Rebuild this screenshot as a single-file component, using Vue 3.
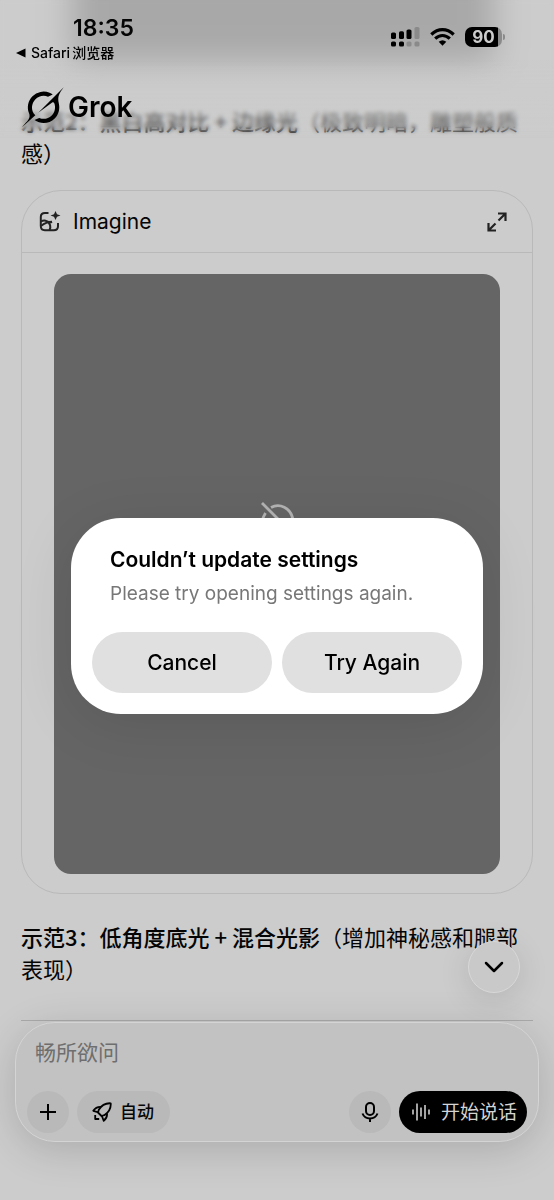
<script setup>
import { ref } from 'vue'

const prompt = ref('')
const dialogActions = ['Cancel', 'Try Again']
</script>

<template>
  <div class="screen">
    <main class="thread">
      <p class="para"><strong>示范2：黑白高对比 + 边缘光</strong>（极致明暗，雕塑般质感）</p>

      <section class="card">
        <header class="card-head">
          <svg class="icon" width="22" height="22" viewBox="0 0 22 22" fill="none" stroke="#222" stroke-width="2">
            <path d="M9.500 2H6Q1.800 2 1.800 6v9q0 4.200 4 4.200h9q4.200 0 4.200-4V12" />
            <path d="M2 10.500Q5 8.800 8 10.300T13 10.800M13 10.800Q7 11 2 15M8 10.300Q13 14 10.500 19" />
            <path d="M16.500 0l1.500 3.300 3.500 1.200-3.500 1.300L16.500 9 15 5.800l-3.500-1.300L15 3.300z" fill="#222" stroke="none" />
          </svg>
          <h2>Imagine</h2>
          <button class="plain" aria-label="Expand">
            <svg class="icon" width="20" height="20" viewBox="0 0 20 20" fill="none" stroke="#222" stroke-width="2.200">
              <path d="M11 1.500h7.500V9M18.500 1.500l-7 7M1.500 11v7.500H9M1.500 18.500l7-7" />
            </svg>
          </button>
        </header>
        <div class="picture">
          <svg class="icon" width="40" height="40" viewBox="0 0 40 40" fill="none" stroke="#b4b4b4" stroke-width="2.800">
            <path d="M5 1l31 31M14 5.500C22 1 34 5 36 18q0 6-3 10M8.500 11C1 22 8 35 20 35q4 0 7-2" />
          </svg>
        </div>
      </section>

      <p class="para"><strong>示范3：低角度底光 + 混合光影</strong>（增加神秘感和腿部表现）</p>
      <hr />
    </main>

    <div class="top-shade"></div>
    <div class="top-blur"></div>

    <header class="top">
      <div class="status">
        <div class="clock">
          <time>18:35</time>
          <a href="#">
            <svg class="icon" width="10" height="10" viewBox="0 0 10 10"><path d="M0 5L9.500 .5v9z" /></svg>
            Safari<span>浏览器</span>
          </a>
        </div>
        <div class="signals">
          <svg class="icon" width="29" height="20" viewBox="0 0 29 20">
            <rect x="0" y="5.500" width="5" height="6.500" rx="1.600" />
            <rect x="8" y="4.300" width="5" height="7.700" rx="1.600" />
            <rect x="15.500" y="2.500" width="5" height="9.500" rx="1.600" />
            <rect x="23.500" y="0" width="5" height="12" rx="1.600" fill="#8a8a8a" />
            <rect x="0" y="14.500" width="5" height="5" rx="1.600" />
            <rect x="8" y="14.500" width="5" height="5" rx="1.600" />
            <rect x="15.500" y="14.500" width="5" height="5" rx="1.600" fill="#8a8a8a" />
            <rect x="23.500" y="14.500" width="5" height="5" rx="1.600" fill="#8a8a8a" />
          </svg>
          <svg class="icon" width="25" height="18" viewBox="0 0 25 18" fill="none" stroke="#000" stroke-width="3.200">
            <path d="M1.300 6.500Q6.500 1.700 12.500 1.700T23.700 6.500" />
            <path d="M5.200 10.600Q8.500 7.500 12.500 7.500T19.800 10.600" />
            <path d="M8.700 13.800Q12.500 10.600 16.300 13.800L12.500 17.800z" fill="#000" stroke="none" />
          </svg>
          <div class="battery"><span>90</span><i></i></div>
        </div>
      </div>

      <div class="brand">
        <svg class="icon" width="42" height="42" viewBox="0 0 24 24">
          <path d="M9.270 15.290l7.978-5.897c.391-.29.95-.177 1.137.272.98 2.369.542 5.215-1.410 7.169-1.951 1.954-4.667 2.382-7.149 1.406l-2.711 1.257c3.889 2.661 8.611 2.003 11.562-.953 2.341-2.344 3.066-5.539 2.388-8.420l.006.007c-.983-4.232.242-5.924 2.750-9.383.06-.082.12-.164.179-.248l-3.301 3.305v-.01L9.267 15.292M7.623 16.723c-2.792-2.670-2.310-6.801.071-9.184 1.761-1.763 4.647-2.483 7.166-1.425l2.705-1.250a7.808 7.808 0 00-1.829-1A8.975 8.975 0 005.984 5.830c-2.533 2.536-3.330 6.436-1.962 9.764 1.022 2.487-.653 4.246-2.340 6.022-.599.63-1.199 1.259-1.682 1.925l7.620-6.815" />
        </svg>
        <span>Grok</span>
      </div>
    </header>

    <div class="bottom">
      <button class="jump" aria-label="Scroll to latest">
        <svg class="icon" width="20" height="12" viewBox="0 0 20 12" fill="none" stroke="#000" stroke-width="2.500" stroke-linecap="round" stroke-linejoin="round">
          <path d="M2 2l8 8 8-8" />
        </svg>
      </button>
      <form class="composer" @submit.prevent>
        <input v-model="prompt" type="text" aria-label="畅所欲问" placeholder="畅所欲问" />
        <div class="tools">
          <button class="round" type="button" aria-label="Add">
            <svg class="icon" width="16" height="16" viewBox="0 0 16 16" fill="none" stroke="#000" stroke-width="2"><path d="M8 0v16M0 8h16" /></svg>
          </button>
          <button class="mode" type="button">
            <svg class="icon" width="20" height="20" viewBox="0 0 20 20" fill="none" stroke="#000" stroke-width="1.800" stroke-linejoin="round">
              <path d="M18.700 1.300Q11 .8 6.800 7.700L6 10.500 9.500 14l2.800-.8Q19.300 8.500 18.700 1.300z" />
              <path d="M9 4.800Q4 4.500 1.300 8.800L6.500 10.300M15 11.500Q15.500 15.500 11.700 18.800L9.800 13.800" />
              <path d="M3.200 13v4h4" />
            </svg>
            <span>自动</span>
          </button>
          <button class="round mic" type="button" aria-label="Dictate">
            <svg class="icon" width="18" height="20" viewBox="0 0 18 20" fill="none" stroke="#000" stroke-width="2">
              <rect x="5" y="1" width="8" height="12" rx="4" />
              <path d="M1.500 11.500Q3.500 16.500 9 16.500T16.500 11.500M9 16.500V20" />
            </svg>
          </button>
          <button class="talk" type="button">
            <svg class="icon" width="18" height="18" viewBox="0 0 18 18" fill="none" stroke="#ccc" stroke-width="1.600">
              <path d="M1 6.500v5M5 .5v17M9 4.500v9M13 2v14M17 6.500v5" />
            </svg>
            <span>开始说话</span>
          </button>
        </div>
      </form>
    </div>

    <div class="overlay">
      <div class="dialog" role="alertdialog" aria-labelledby="dlg-title" aria-describedby="dlg-text">
        <h1 id="dlg-title">Couldn’t update settings</h1>
        <p id="dlg-text">Please try opening settings again.</p>
        <div class="actions">
          <button v-for="label in dialogActions" :key="label" type="button">{{ label }}</button>
        </div>
      </div>
    </div>
  </div>
</template>

<style>
body {
  margin: 0;
  background: #ccc;
}
</style>

<style scoped>
.screen {
  position: relative;
  min-height: 100vh;
  overflow: hidden;
  background: #ccc;
  color: #050505;
  font-family: Inter, "Noto Sans CJK SC", sans-serif;
}
.icon {
  display: block;
  flex: none;
}
button {
  margin: 0;
  padding: 0;
  border: 0;
  font: inherit;
  color: inherit;
  cursor: pointer;
}
.thread {
  padding: 104px 21px 0;
}
.para {
  margin: 0;
  font-family: "Noto Sans CJK SC", sans-serif;
  font-size: 22px;
  line-height: 32px;
}
.para strong {
  font-weight: 500;
}
.card {
  margin: 22px 0 26px;
  border: 1px solid #b9b9b9;
  border-radius: 40px;
}
.card-head {
  display: flex;
  align-items: center;
  gap: 12px;
  height: 61px;
  padding: 0 25px 0 17px;
  border-bottom: 1px solid #b9b9b9;
}
.card-head h2 {
  flex: 1;
  margin: 0;
  font-size: 21px;
  font-weight: 400;
}
.plain {
  background: none;
}
.picture {
  display: flex;
  justify-content: center;
  height: 600px;
  margin: 21px 32px 19px;
  padding-top: 228px;
  box-sizing: border-box;
  border-radius: 17px;
  background: #656565;
}
hr {
  height: 1px;
  margin: 36px 0 0;
  border: 0;
  background: #aaa;
}
.top-shade {
  position: absolute;
  top: -40px;
  left: 72px;
  right: 60px;
  height: 102px;
  background: #a8a8a8;
  filter: blur(16px);
}
.top-blur {
  position: absolute;
  inset: 0 0 auto;
  height: 138px;
  background: linear-gradient(rgba(204, 204, 204, 0) 60px, rgba(204, 204, 204, .7) 108px, rgba(204, 204, 204, .2) 136px);
  backdrop-filter: blur(2px);
  mask-image: linear-gradient(#000 126px, transparent);
}
.top {
  position: absolute;
  inset: 0 0 auto;
}
.status {
  display: flex;
  justify-content: space-between;
  padding: 14px 49px 0 16px;
}
time {
  display: block;
  padding-left: 57px;
  font-size: 23px;
  line-height: 28px;
  font-weight: 600;
}
.clock a {
  display: flex;
  align-items: center;
  gap: 5px;
  color: #000;
  font-size: 14px;
  line-height: 22px;
  font-weight: 500;
  text-decoration: none;
}
.clock a span {
  margin-left: -3px;
}
.signals {
  display: flex;
  align-items: center;
  gap: 10px;
  height: 46px;
}
.battery {
  display: flex;
  align-items: center;
  gap: 1px;
}
.battery span {
  width: 37px;
  border-radius: 7px;
  background: linear-gradient(90deg, #000 33px, #8a8a8a 33px);
  color: #ccc;
  font-size: 17px;
  line-height: 20px;
  font-weight: 700;
  text-align: center;
}
.battery i {
  width: 2px;
  height: 6px;
  border-radius: 0 2px 2px 0;
  background: #8a8a8a;
}
.brand {
  display: flex;
  align-items: center;
  gap: 4px;
  margin-top: 22px;
  padding-left: 22px;
  color: #000;
  font-size: 28px;
  line-height: 42px;
  font-weight: 600;
}
.bottom {
  position: absolute;
  inset: auto 0 0;
  padding: 0 15px 58px;
}
.jump {
  display: grid;
  place-items: center;
  width: 52px;
  height: 52px;
  margin: 0 19px 29px auto;
  border: 1px solid #d8d8d8;
  border-radius: 50%;
  background: #c9c9c9;
  box-shadow: 0 6px 32px rgba(0, 0, 0, .12);
}
.composer {
  padding: 11px 11px 8px;
  border: 1px solid #d4d4d4;
  border-radius: 40px;
  background: #c2c2c2;
  box-shadow: 0 8px 40px rgba(0, 0, 0, .16);
}
.composer input {
  display: block;
  width: 100%;
  height: 36px;
  margin-bottom: 21px;
  padding: 0 8px;
  box-sizing: border-box;
  border: 0;
  outline: 0;
  background: none;
  color: #050505;
  font: inherit;
  font-size: 21px;
}
.composer input::placeholder {
  color: #6e6e6e;
}
.tools {
  display: flex;
  gap: 8px;
}
.tools button {
  display: flex;
  align-items: center;
  justify-content: center;
  height: 42px;
  border-radius: 21px;
  background: #b9b9b9;
}
.tools span {
  padding-bottom: 3px;
}
.tools .round {
  width: 42px;
}
.tools .mode {
  gap: 8px;
  padding: 0 16px 0 15px;
  font-size: 17px;
  font-weight: 500;
}
.tools .mic {
  margin-left: auto;
}
.tools .talk {
  gap: 11px;
  padding: 0 10px 0 13px;
  background: #000;
  color: #d4d4d4;
  font-size: 19px;
}
.overlay {
  position: absolute;
  inset: 0;
  display: grid;
  place-items: center;
  padding: 32px 71px 0;
}
.dialog {
  width: 100%;
  padding: 28px 21px 21px;
  box-sizing: border-box;
  border-radius: 50px;
  background: #fff;
  box-shadow: 0 10px 60px rgba(0, 0, 0, .1);
}
.dialog h1 {
  margin: 0 18px 5px;
  color: #000;
  font-size: 21px;
  line-height: 28px;
  font-weight: 600;
}
.dialog p {
  margin: 0 18px 24px;
  color: #777;
  font-size: 19px;
  line-height: 29px;
}
.actions {
  display: grid;
  grid-template-columns: 1fr 1fr;
  gap: 10px;
}
.actions button {
  height: 61px;
  border-radius: 31px;
  background: #e0e0e0;
  color: #000;
  font-size: 21px;
  font-weight: 500;
}
</style>
